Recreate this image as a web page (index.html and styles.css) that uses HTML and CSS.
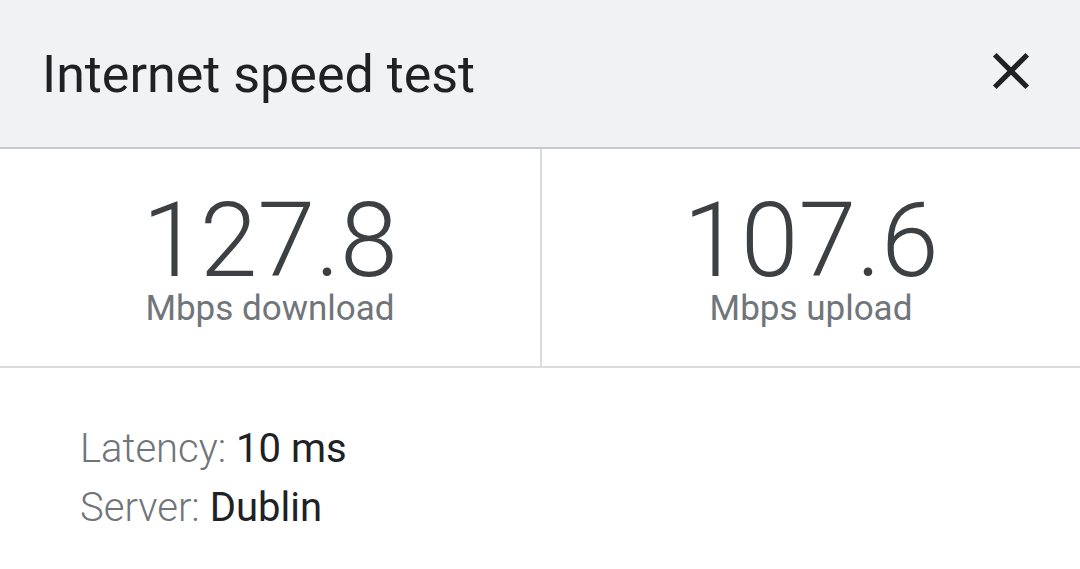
FILE: index.html
```html
<!DOCTYPE html>
<html>
<head>
<meta charset="utf-8">
<link rel="stylesheet" href="styles.css">
</head>
<body>
<div class="card">
  <header class="head">
    <h1 class="title">Internet speed test</h1>
    <button class="close" aria-label="Close">
      <svg viewBox="0 0 24 24" width="62" height="62"><path fill="#202124" d="M19 6.41L17.59 5 12 10.59 6.41 5 5 6.41 10.59 12 5 17.59 6.41 19 12 13.41 17.59 19 19 17.59 13.41 12z"/></svg>
    </button>
  </header>
  <section class="stats">
    <div class="stat">
      <div class="num">127.8</div>
      <div class="unit">Mbps download</div>
    </div>
    <div class="stat">
      <div class="num">107.6</div>
      <div class="unit">Mbps upload</div>
    </div>
  </section>
  <section class="details">
    <div class="row"><span class="lbl">Latency:</span> <span class="val">10 ms</span></div>
    <div class="row"><span class="lbl">Server:</span> <span class="val">Dublin</span></div>
  </section>
</div>
</body>
</html>
```

FILE: styles.css
```css
html, body {
  margin: 0;
  padding: 0;
  background: #ffffff;
}
body {
  font-family: Roboto, "Liberation Sans", sans-serif;
  width: 1080px;
  height: 569px;
  overflow: hidden;
}
.card {
  display: flex;
  flex-direction: column;
}
.head {
  height: 147px;
  background: #f1f2f4;
  border-bottom: 2px solid #c9cacd;
  display: flex;
  align-items: center;
  justify-content: space-between;
  padding: 0 38px 0 42px;
}
.title {
  margin: 0;
  font-size: 52px;
  font-weight: 400;
  color: #202124;
  line-height: 1;
  padding-top: 3px;
}
.close {
  border: 0;
  background: transparent;
  padding: 0;
  width: 62px;
  height: 62px;
  display: flex;
  margin-bottom: 6px;
}
.stats {
  display: grid;
  grid-template-columns: 540px 1fr;
  height: 217px;
  border-bottom: 2px solid #dadce0;
}
.stat {
  display: flex;
  flex-direction: column;
  align-items: center;
  padding-top: 46px;
}
.stat + .stat {
  border-left: 2px solid #dadce0;
}
.num {
  font-size: 104px;
  font-weight: 300;
  line-height: 92px;
  color: #3c4043;
}
.unit {
  margin-top: 2px;
  font-size: 35px;
  line-height: 40px;
  color: #70757a;
}
.details {
  padding: 51px 0 0 80px;
}
.row {
  font-size: 40px;
  line-height: 59px;
}
.lbl {
  font-weight: 300;
  color: #70757a;
}
.val {
  font-weight: 400;
  color: #202124;
}
```
